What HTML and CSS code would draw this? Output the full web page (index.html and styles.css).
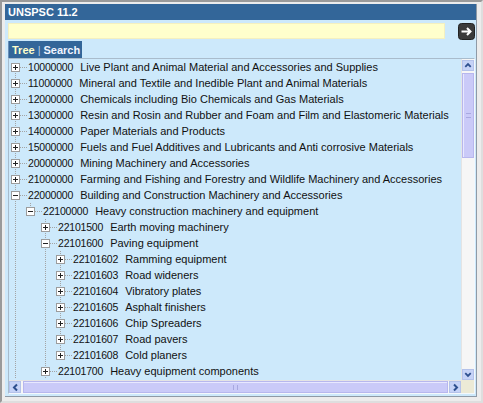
FILE: index.html
```html
<!DOCTYPE html>
<html lang="en">
<head>
  <meta charset="UTF-8" />
  <title>UNSPSC 11.2</title>
  <link rel="stylesheet" href="styles.css">
</head>
<body>
  <div class="frame">
    <div class="panel">
      <div class="title">UNSPSC 11.2</div>

      <div class="search">
        <input class="query" type="text" value="">
        <button class="go" title="Go">
          <svg width="17" height="17" viewBox="0 0 17 17">
            <rect x="0.5" y="0.5" width="16" height="16" rx="3" fill="#3b3b3b" stroke="#222"/>
            <path d="M3.5 8.5 H12.5 M9 5 L12.5 8.5 L9 12" fill="none" stroke="#fff" stroke-width="2"/>
          </svg>
        </button>
      </div>

      <div class="tabs">
        <span class="tab on">Tree</span><span class="sep">|</span><span class="tab">Search</span>
      </div>

      <div class="treebox">
        <div class="treeview">
          <ul class="tree">
            <li><div class="row"><i class="exp plus"></i><span class="code">10000000</span><span class="name">Live Plant and Animal Material and Accessories and Supplies</span></div></li>
            <li><div class="row"><i class="exp plus"></i><span class="code">11000000</span><span class="name">Mineral and Textile and Inedible Plant and Animal Materials</span></div></li>
            <li><div class="row"><i class="exp plus"></i><span class="code">12000000</span><span class="name">Chemicals including Bio Chemicals and Gas Materials</span></div></li>
            <li><div class="row"><i class="exp plus"></i><span class="code">13000000</span><span class="name">Resin and Rosin and Rubber and Foam and Film and Elastomeric Materials</span></div></li>
            <li><div class="row"><i class="exp plus"></i><span class="code">14000000</span><span class="name">Paper Materials and Products</span></div></li>
            <li><div class="row"><i class="exp plus"></i><span class="code">15000000</span><span class="name">Fuels and Fuel Additives and Lubricants and Anti corrosive Materials</span></div></li>
            <li><div class="row"><i class="exp plus"></i><span class="code">20000000</span><span class="name">Mining Machinery and Accessories</span></div></li>
            <li><div class="row"><i class="exp plus"></i><span class="code">21000000</span><span class="name">Farming and Fishing and Forestry and Wildlife Machinery and Accessories</span></div></li>
            <li class="more">
              <div class="row"><i class="exp minus"></i><span class="code">22000000</span><span class="name">Building and Construction Machinery and Accessories</span></div>
              <ul>
                <li>
                  <div class="row"><i class="exp minus"></i><span class="code">22100000</span><span class="name">Heavy construction machinery and equipment</span></div>
                  <ul>
                    <li><div class="row"><i class="exp plus"></i><span class="code">22101500</span><span class="name">Earth moving machinery</span></div></li>
                    <li>
                      <div class="row"><i class="exp minus"></i><span class="code">22101600</span><span class="name">Paving equipment</span></div>
                      <ul>
                        <li><div class="row"><i class="exp plus"></i><span class="code">22101602</span><span class="name">Ramming equipment</span></div></li>
                        <li><div class="row"><i class="exp plus"></i><span class="code">22101603</span><span class="name">Road wideners</span></div></li>
                        <li><div class="row"><i class="exp plus"></i><span class="code">22101604</span><span class="name">Vibratory plates</span></div></li>
                        <li><div class="row"><i class="exp plus"></i><span class="code">22101605</span><span class="name">Asphalt finishers</span></div></li>
                        <li><div class="row"><i class="exp plus"></i><span class="code">22101606</span><span class="name">Chip Spreaders</span></div></li>
                        <li><div class="row"><i class="exp plus"></i><span class="code">22101607</span><span class="name">Road pavers</span></div></li>
                        <li><div class="row"><i class="exp plus"></i><span class="code">22101608</span><span class="name">Cold planers</span></div></li>
                      </ul>
                    </li>
                    <li class="more"><div class="row"><i class="exp plus"></i><span class="code">22101700</span><span class="name">Heavy equipment components</span></div></li>
                  </ul>
                </li>
              </ul>
            </li>
          </ul>
        </div>

        <div class="vscroll">
          <div class="sb-btn">
            <svg width="11" height="9" viewBox="0 0 11 9"><path d="M2.5 6 L5.5 3 L8.5 6" fill="none" stroke="#2d4f8e" stroke-width="2"/></svg>
          </div>
          <div class="thumb v"><span class="grip"></span></div>
          <div class="track"></div>
          <div class="sb-btn">
            <svg width="11" height="9" viewBox="0 0 11 9"><path d="M2.5 3 L5.5 6 L8.5 3" fill="none" stroke="#2d4f8e" stroke-width="2"/></svg>
          </div>
        </div>

        <div class="hscroll">
          <div class="sb-btn">
            <svg width="9" height="11" viewBox="0 0 9 11"><path d="M6 2.5 L3 5.5 L6 8.5" fill="none" stroke="#2d4f8e" stroke-width="2"/></svg>
          </div>
          <div class="thumb h"><span class="grip"></span></div>
          <div class="sb-btn">
            <svg width="9" height="11" viewBox="0 0 9 11"><path d="M3 2.5 L6 5.5 L3 8.5" fill="none" stroke="#2d4f8e" stroke-width="2"/></svg>
          </div>
        </div>

        <div class="corner"></div>
      </div>
    </div>
  </div>
</body>
</html>
```

FILE: styles.css
```css
body {
  margin: 0;
  background: #ececec;
  font-family: "Liberation Sans", Arial, sans-serif;
}

.frame {
  width: 483px;
  height: 403px;
  box-sizing: border-box;
  border-top: 2px solid #9a9a9a;
  border-left: 2px solid #9a9a9a;
  border-right: 2px solid #dedede;
  border-bottom: 2px solid #dedede;
  padding: 2px 4px 4px 3px;
}

.panel {
  background: #cde9fb;
  border-right: 1px solid #8f9aa6;
  border-bottom: 1px solid #8f9aa6;
  height: 393px;
  box-sizing: border-box;
}

.title {
  background: #336699;
  color: #fff;
  font-weight: bold;
  font-size: 11px;
  height: 16px;
  line-height: 16px;
  padding-left: 3px;
}

.search {
  display: flex;
  align-items: flex-start;
  justify-content: space-between;
  padding: 3px 1px 0 3px;
  height: 18px;
}

.query {
  width: 437px;
  height: 16px;
  box-sizing: border-box;
  margin: 0;
  border: 1px solid #f4f0c0;
  background: #ffffcc;
  outline: none;
}

.go {
  border: none;
  padding: 0;
  background: none;
  width: 17px;
  height: 17px;
  cursor: pointer;
}

.go svg { display: block; }

.tabs {
  display: inline-flex;
  align-items: center;
  margin: 0 0 0 3px;
  height: 17px;
  padding: 0 2px 0 3px;
  background: #336699;
  border-left: 1px solid #6a8fb8;
  font-size: 11px;
  font-weight: bold;
  color: #f0f4ff;
  vertical-align: top;
}

.tab.on { color: #ffffcc; }
.sep { color: #b8cde6; margin: 0 3px; font-weight: normal; }

.treebox {
  display: grid;
  grid-template-columns: minmax(0, 1fr) 13px;
  grid-template-rows: 321px 13px;
  margin: -1px 1px 0 3px;
  border: 1px solid #a9bccc;
  border-right-color: #f4f8fc;
  border-bottom-color: #f4f8fc;
}

.treeview {
  overflow: hidden;
  font-size: 11px;
  color: #111;
}

.tree, .tree ul {
  list-style: none;
  margin: 0;
  padding: 0;
}

.tree ul { padding-left: 15px; }

/* dotted connector lines */
.tree li {
  background: repeating-linear-gradient(to bottom, #a4a4a4 0 1px, transparent 1px 2px) no-repeat 6px 0 / 1px 100%;
}
.tree li:last-child { background-size: 1px 8px; }
.tree li.more { background-size: 1px 100%; }
.tree > li:first-child { background-position: 6px 8px; }

.row {
  display: flex;
  align-items: center;
  height: 16px;
  white-space: nowrap;
  background: repeating-linear-gradient(to right, #a4a4a4 0 1px, transparent 1px 2px) no-repeat 11px 8px / 7px 1px;
}

.exp {
  width: 9px;
  height: 9px;
  box-sizing: border-box;
  margin-left: 2px;
  border: 1px solid #9c9c9c;
  flex: none;
}

.exp.minus {
  background: linear-gradient(#222, #222) center / 5px 1px no-repeat, #fff;
}

.exp.plus {
  background:
    linear-gradient(#222, #222) center / 5px 1px no-repeat,
    linear-gradient(#222, #222) center / 1px 5px no-repeat,
    #fff;
}

.code { margin-left: 8px; font-size: 10.5px; letter-spacing: -0.2px; }
.name { margin-left: 7px; }

/* scrollbars */
.vscroll {
  display: flex;
  flex-direction: column;
  background: #f6f6f6;
  border-left: 1px solid #e4e4e4;
}

.hscroll {
  display: flex;
  background: #f6f6f6;
  border-top: 1px solid #e4e4e4;
}

.sb-btn {
  display: flex;
  align-items: center;
  justify-content: center;
  background: #c6d3f7;
  border: 1px solid #b4c2ea;
  box-sizing: border-box;
  flex: none;
}

.vscroll .sb-btn { height: 11px; }
.vscroll .sb-btn:first-child { margin-top: 1px; }
.hscroll .sb-btn { width: 12px; }

.thumb {
  background: #cacaf8;
  border: 1px solid #b7b7ee;
  box-sizing: border-box;
  display: flex;
  align-items: center;
  justify-content: center;
}

.thumb.v {
  height: 85px;
  margin-top: 2px;
  box-shadow: inset 3px 0 0 -2px #e8e8ff;
}

.thumb.h {
  flex: 1;
  margin: 0 1px 0 2px;
  box-shadow: inset 0 3px 0 -2px #e8e8ff;
}

.grip {
  width: 5px;
  height: 5px;
  border-top: 1px solid #a8a8e0;
  border-bottom: 1px solid #a8a8e0;
  box-sizing: border-box;
}

.thumb.h .grip {
  border: none;
  border-left: 1px solid #a8a8e0;
  border-right: 1px solid #a8a8e0;
}

.track { flex: 1; }

.corner { background: #ecead6; }
```
